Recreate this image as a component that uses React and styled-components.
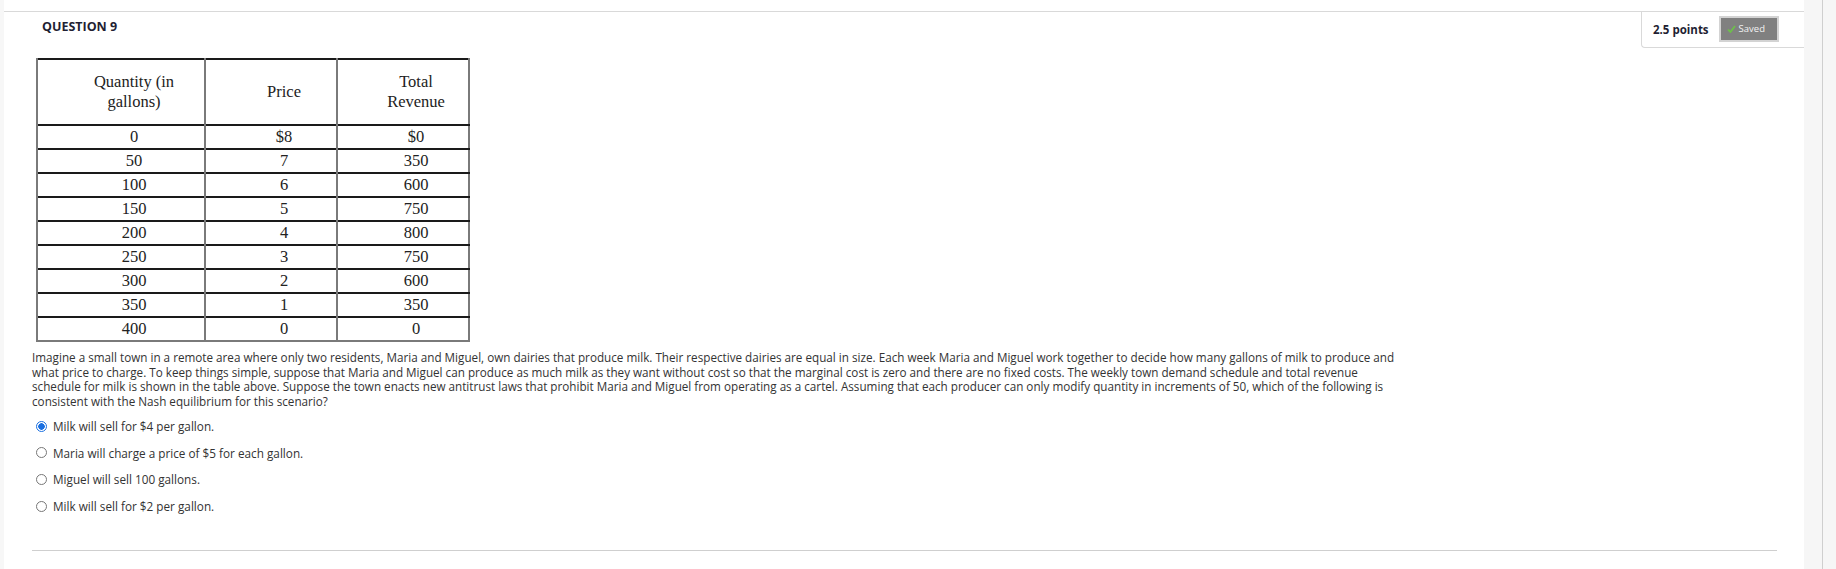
import React from "react";
import styled, { createGlobalStyle } from "styled-components";

const rows = [
  ["0", "$8", "$0"],
  ["50", "7", "350"],
  ["100", "6", "600"],
  ["150", "5", "750"],
  ["200", "4", "800"],
  ["250", "3", "750"],
  ["300", "2", "600"],
  ["350", "1", "350"],
  ["400", "0", "0"],
];

const answers = [
  "Milk will sell for $4 per gallon.",
  "Maria will charge a price of $5 for each gallon.",
  "Miguel will sell 100 gallons.",
  "Milk will sell for $2 per gallon.",
];

const Global = createGlobalStyle`
  body {
    margin: 0;
    font-family: "Open Sans", "Liberation Sans", sans-serif;
    background: #fff;
  }
`;

const Page = styled.div`
  display: flex;
  height: 569px;
  overflow: hidden;
`;

const Gutter = styled.div`
  width: 4px;
  background: #f7f7f7;
`;

const Main = styled.div`
  flex: 1;
  padding-top: 11px;
  background: #fff;
`;

const Rail = styled.div`
  width: 32px;
  background: #f6f6f6;
  display: flex;
  &::before {
    content: "";
    width: 1px;
    margin-left: 18px;
    background: #cfcfcf;
  }
`;

const Header = styled.div`
  display: flex;
  justify-content: space-between;
  align-items: flex-start;
  border-top: 1px solid #d9d9d9;
  height: 37px;
`;

const Title = styled.h3`
  margin: 0;
  padding: 6px 0 0 38px;
  font-size: 12.5px;
  line-height: 18px;
  font-weight: 700;
  color: #1f1f33;
`;

const PointsBox = styled.div`
  display: flex;
  align-items: center;
  gap: 10px;
  width: 163px;
  height: 36px;
  box-sizing: border-box;
  padding-left: 11px;
  border-left: 1px solid #d9d9d9;
  border-bottom: 1px solid #d9d9d9;
  border-bottom-left-radius: 4px;
`;

const Points = styled.span`
  font-size: 11.5px;
  font-weight: 700;
  color: #1f1f33;
`;

const SavedButton = styled.span`
  display: flex;
  align-items: center;
  gap: 3px;
  width: 60px;
  height: 26px;
  margin-top: -2px;
  box-sizing: border-box;
  padding-left: 6px;
  background: #808080;
  border: 2px solid #d3d3d3;
  color: #f2f2f2;
  font-size: 9.5px;
`;

const Body = styled.div`
  padding: 9px 27px 0 28px;
`;

const Table = styled.table`
  margin-left: 4px;
  border-collapse: collapse;
  font-family: "Liberation Serif", "Times New Roman", serif;
  font-size: 16.5px;
  color: #222;
  border: 2px solid #7a7a7a;
  border-top: 2px solid #1a1a1a;
`;

const HeadCell = styled.th`
  width: ${p => p.$w}px;
  height: 66px;
  padding: 0 0 0 26px;
  font-weight: 400;
  line-height: 20px;
  border-left: 2px solid #7a7a7a;
  box-sizing: border-box;
`;

const Cell = styled.td`
  height: 22px;
  padding: 0 0 0 26px;
  text-align: center;
  line-height: 20px;
  border-top: 2px solid #1a1a1a;
  border-left: 2px solid #7a7a7a;
`;

const Question = styled.p`
  margin: 8px 0 0;
  max-width: 1372px;
  font-size: 11.7px;
  line-height: 14.5px;
  color: #333;
`;

const Options = styled.ul`
  list-style: none;
  margin: 5px 0 0;
  padding: 0 0 0 4px;
`;

const Option = styled.li`
  display: flex;
  align-items: center;
  gap: 6px;
  height: 26.6px;
  font-size: 11.75px;
  color: #333;
`;

const Radio = styled.span`
  flex: none;
  width: 11px;
  height: 11px;
  box-sizing: border-box;
  border-radius: 50%;
  border: 1px solid ${p => (p.$on ? "#1a6fe0" : "#777")};
  background: ${p => (p.$on ? "radial-gradient(circle, #1a6fe0 0 3px, #fff 3.5px)" : "#fff")};
`;

const Rule = styled.hr`
  margin: 31px 0 0;
  border: 0;
  border-top: 1px solid #cfcfcf;
`;

function Check() {
  return (
    <svg width="9" height="8" viewBox="0 0 9 8">
      <path d="M1 4.5 L3.4 7 L8 1" fill="none" stroke="#6cc04a" strokeWidth="1.8" />
    </svg>
  );
}

export default function App() {
  return (
    <Page>
      <Global />
      <Gutter />
      <Main>
        <Header>
          <Title>QUESTION 9</Title>
          <PointsBox>
            <Points>2.5 points</Points>
            <SavedButton>
              <Check />
              Saved
            </SavedButton>
          </PointsBox>
        </Header>
        <Body>
          <Table>
            <thead>
              <tr>
                <HeadCell $w={168}>Quantity (in<br />gallons)</HeadCell>
                <HeadCell $w={132}>Price</HeadCell>
                <HeadCell $w={132}>Total<br />Revenue</HeadCell>
              </tr>
            </thead>
            <tbody>
              {rows.map(r => (
                <tr key={r[0]}>
                  {r.map((v, i) => (
                    <Cell key={i}>{v}</Cell>
                  ))}
                </tr>
              ))}
            </tbody>
          </Table>
          <Question>
            Imagine a small town in a remote area where only two residents, Maria and Miguel, own dairies that
            produce milk. Their respective dairies are equal in size. Each week Maria and Miguel work together to
            decide how many gallons of milk to produce and what price to charge. To keep things simple, suppose that
            Maria and Miguel can produce as much milk as they want without cost so that the marginal cost is zero and
            there are no fixed costs. The weekly town demand schedule and total revenue schedule for milk is shown in
            the table above. Suppose the town enacts new antitrust laws that prohibit Maria and Miguel from operating
            as a cartel. Assuming that each producer can only modify quantity in increments of 50, which of the
            following is consistent with the Nash equilibrium for this scenario?
          </Question>
          <Options>
            {answers.map((a, i) => (
              <Option key={a}>
                <Radio $on={i === 0} />
                {a}
              </Option>
            ))}
          </Options>
          <Rule />
        </Body>
      </Main>
      <Rail />
    </Page>
  );
}
